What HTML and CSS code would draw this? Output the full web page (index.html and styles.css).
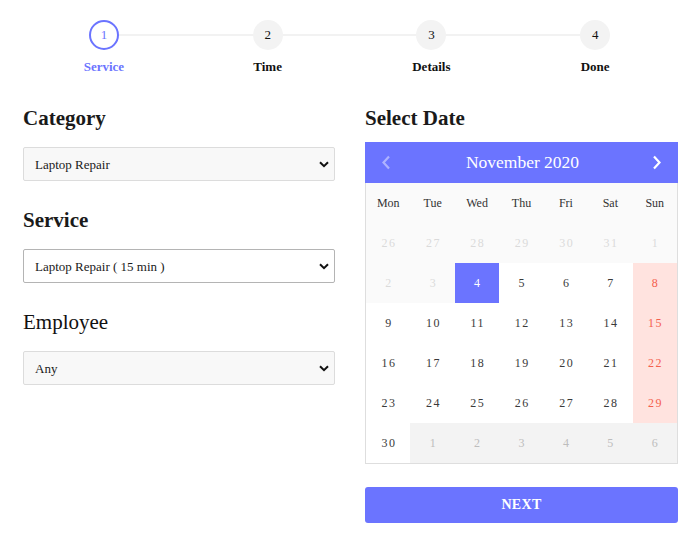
FILE: index.html
```html
<!DOCTYPE html>
<html lang="en">
<head>
<meta charset="utf-8">
<title>Booking</title>
<link rel="stylesheet" href="styles.css">
</head>
<body>
<div class="stepper">
  <div class="stepper-line"></div>
  <div class="step active"><span class="step-circle">1</span><span class="step-label">Service</span></div>
  <div class="step"><span class="step-circle">2</span><span class="step-label">Time</span></div>
  <div class="step"><span class="step-circle">3</span><span class="step-label">Details</span></div>
  <div class="step"><span class="step-circle">4</span><span class="step-label">Done</span></div>
</div>

<div class="main">
  <div class="col">
    <div class="field">
      <h2 class="label">Category</h2>
      <div class="select-wrap">
        <select class="select"><option>Laptop Repair</option></select>
        <svg class="chev" width="10" height="7" viewBox="0 0 10 7"><path d="M1 1.2 L5 5.2 L9 1.2" fill="none" stroke="#111" stroke-width="2"/></svg>
      </div>
    </div>
    <div class="field">
      <h2 class="label">Service</h2>
      <div class="select-wrap">
        <select class="select focus"><option>Laptop Repair ( 15 min )</option></select>
        <svg class="chev" width="10" height="7" viewBox="0 0 10 7"><path d="M1 1.2 L5 5.2 L9 1.2" fill="none" stroke="#111" stroke-width="2"/></svg>
      </div>
    </div>
    <div class="field">
      <h2 class="label light">Employee</h2>
      <div class="select-wrap">
        <select class="select"><option>Any</option></select>
        <svg class="chev" width="10" height="7" viewBox="0 0 10 7"><path d="M1 1.2 L5 5.2 L9 1.2" fill="none" stroke="#111" stroke-width="2"/></svg>
      </div>
    </div>
  </div>

  <div class="col">
    <h2 class="label cal-title">Select Date</h2>
    <div class="calendar">
      <div class="cal-head">
        <svg class="nav prev" width="10" height="15" viewBox="0 0 10 15"><path d="M8 1.5 L2.5 7.5 L8 13.5" fill="none" stroke="#fff" stroke-width="2.2"/></svg>
        <span class="month">November 2020</span>
        <svg class="nav" width="10" height="15" viewBox="0 0 10 15"><path d="M2 1.5 L7.5 7.5 L2 13.5" fill="none" stroke="#fff" stroke-width="2.2"/></svg>
      </div>
      <div class="cal-body">
        <div class="wd">Mon</div><div class="wd">Tue</div><div class="wd">Wed</div><div class="wd">Thu</div><div class="wd">Fri</div><div class="wd">Sat</div><div class="wd">Sun</div>

        <div class="d off">26</div><div class="d off">27</div><div class="d off">28</div><div class="d off">29</div><div class="d off">30</div><div class="d off">31</div><div class="d off">1</div>

        <div class="d off">2</div><div class="d off">3</div><div class="d sel">4</div><div class="d">5</div><div class="d">6</div><div class="d">7</div><div class="d sun">8</div>

        <div class="d">9</div><div class="d">10</div><div class="d">11</div><div class="d">12</div><div class="d">13</div><div class="d">14</div><div class="d sun">15</div>

        <div class="d">16</div><div class="d">17</div><div class="d">18</div><div class="d">19</div><div class="d">20</div><div class="d">21</div><div class="d sun">22</div>

        <div class="d">23</div><div class="d">24</div><div class="d">25</div><div class="d">26</div><div class="d">27</div><div class="d">28</div><div class="d sun">29</div>

        <div class="d">30</div><div class="d next">1</div><div class="d next">2</div><div class="d next">3</div><div class="d next">4</div><div class="d next">5</div><div class="d next">6</div>
      </div>
    </div>
    <button class="btn">NEXT</button>
  </div>
</div>
</body>
</html>
```
FILE: styles.css
```css
* { box-sizing: border-box; }
body {
  margin: 0;
  font-family: "Liberation Serif", "Times New Roman", serif;
  color: #1a1a1a;
  background: #fff;
}
.stepper {
  position: relative;
  display: grid;
  grid-template-columns: repeat(4, 1fr);
  margin: 0 19px 0 22px;
  padding-top: 20px;
}
.stepper-line {
  position: absolute;
  top: 34px;
  left: 12.5%;
  right: 12.5%;
  height: 2px;
  background: #f2f2f2;
}
.step {
  position: relative;
  display: flex;
  flex-direction: column;
  align-items: center;
}
.step-circle {
  width: 30px;
  height: 30px;
  border-radius: 50%;
  background: #f3f3f3;
  display: flex;
  align-items: center;
  justify-content: center;
  font-size: 13px;
  color: #111;
}
.step-label {
  margin-top: 9px;
  font-size: 13px;
  line-height: 16px;
  font-weight: bold;
  color: #111;
}
.step.active .step-circle {
  background: #fff;
  border: 2px solid #6b74ff;
  color: #6b74ff;
}
.step.active .step-label { color: #6b74ff; }

.main {
  display: grid;
  grid-template-columns: 312px 313px;
  column-gap: 30px;
  margin: 31px 0 0 23px;
}
.field { margin-bottom: 27px; }
.label {
  margin: 0 0 17px;
  font-size: 21px;
  line-height: 24px;
  font-weight: bold;
  color: #1a1a1a;
}
.label.light { font-weight: normal; color: #111; }
.select-wrap { position: relative; }
.select {
  display: block;
  width: 100%;
  height: 34px;
  appearance: none;
  -webkit-appearance: none;
  background: #f8f8f8;
  border: 1px solid #dcdcdc;
  border-radius: 2px;
  padding: 0 30px 0 11px;
  font-family: "Liberation Serif", serif;
  font-size: 13px;
  color: #1a1a1a;
  outline: none;
}
.select.focus {
  background: #fff;
  border-color: #b4b4b4;
}
.chev {
  position: absolute;
  right: 6px;
  top: 14px;
  pointer-events: none;
}
.cal-title { margin-bottom: 12px; }
.calendar { width: 313px; }
.cal-head {
  height: 41px;
  background: #6b74ff;
  display: flex;
  align-items: center;
  justify-content: space-between;
  padding: 0 16px 0 16px;
}
.nav.prev { opacity: 0.45; }
.month {
  color: #fff;
  font-size: 17.5px;
  margin-left: 2px;
}
.cal-body {
  display: grid;
  grid-template-columns: repeat(7, 1fr);
  grid-auto-rows: 40px;
  border: 1px solid #dedede;
  border-top: none;
}
.wd {
  background: #fafafa;
  display: flex;
  align-items: center;
  justify-content: center;
  font-size: 12px;
  color: #333;
}
.d {
  display: flex;
  align-items: center;
  justify-content: center;
  font-size: 12px;
  letter-spacing: 1.5px;
  text-indent: 1.5px;
  color: #3a3a3a;
  background: #fff;
}
.d.off { background: #fafafa; color: #dadada; }
.d.sel { background: #6b74ff; color: #fff; }
.d.sun { background: #ffe3df; color: #f4604e; }
.d.next { background: #f3f3f3; color: #bdbdbd; }
.btn {
  display: block;
  width: 313px;
  height: 36px;
  margin-top: 23px;
  border: none;
  border-radius: 3px;
  background: #6b74ff;
  color: #fff;
  font-family: "Liberation Serif", serif;
  font-weight: bold;
  font-size: 14px;
  letter-spacing: 0.3px;
}
```
